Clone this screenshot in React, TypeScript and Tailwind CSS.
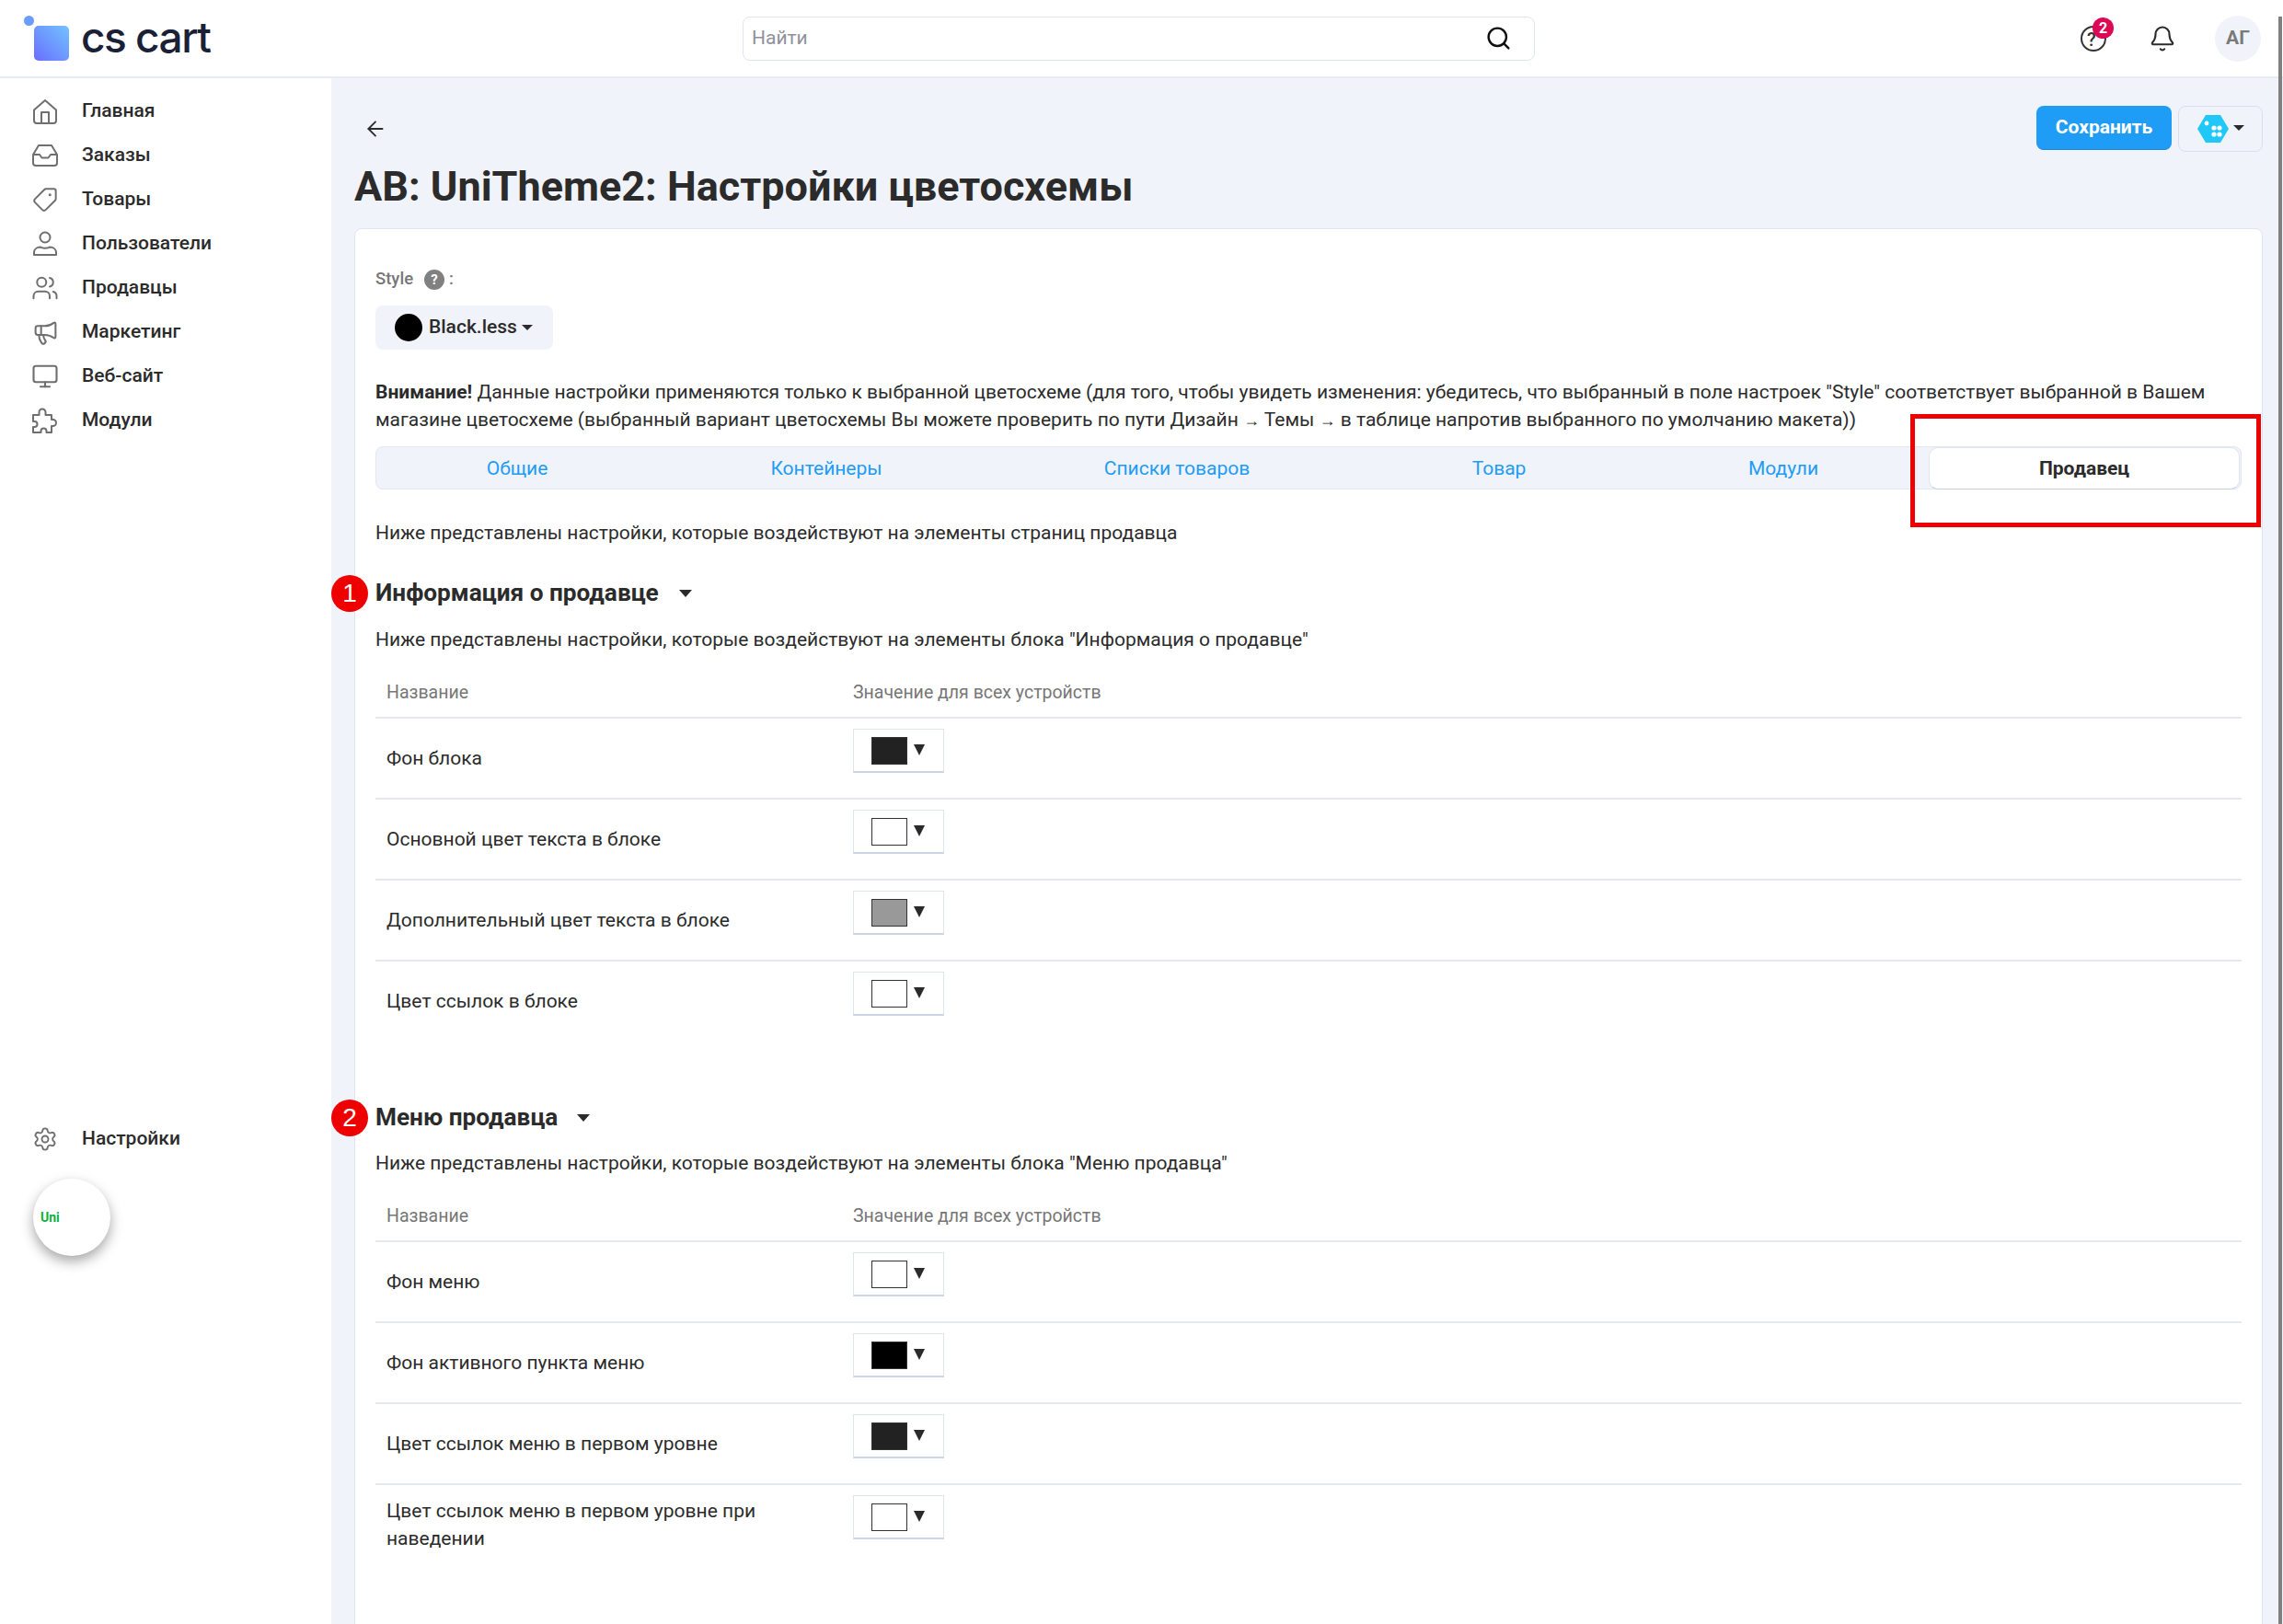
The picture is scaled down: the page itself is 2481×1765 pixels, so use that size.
import React from "react";
import { ArrowLeft, Bell, Megaphone, Monitor, Search, Settings, Tag, Users } from "lucide-react";

const HomeI = () => (
  <svg width="28" height="28" viewBox="0 0 28 28" fill="none" stroke="#6f6f6f" strokeWidth="2" strokeLinejoin="round"><path d="M2 12.5 14 2l12 10.5V24a3 3 0 0 1-3 3H5a3 3 0 0 1-3-3z" /><path d="M10 27V15h8v12" /></svg>
);
const InboxI = () => (
  <svg width="28" height="24" viewBox="0 0 28 24" fill="none" stroke="#6f6f6f" strokeWidth="2" strokeLinejoin="round"><path d="M1 11 7 1h14l6 10v9a3 3 0 0 1-3 3H4a3 3 0 0 1-3-3z" /><path d="M1 11h7l2.5 3.5h7L20 11h7" /></svg>
);
const UserI = () => (
  <svg width="28" height="28" viewBox="0 0 28 28" fill="none" stroke="#6f6f6f" strokeWidth="2" strokeLinejoin="round"><circle cx="14" cy="7" r="5.5" /><path d="M2 26v-2.5C2 20 5 17.5 9 17.5c1.5 1.5 8.500 1.500 10 0 4 0 7 2.500 7 6V26z" /></svg>
);
const PuzzleI = () => (
  <svg width="30" height="30" viewBox="0 0 30 30" fill="none" stroke="#6f6f6f" strokeWidth="2" strokeLinejoin="round"><path d="M2 9h6.500V6a3.500 3.500 0 0 1 7 0v3H22v5h1.500a3.500 3.500 0 0 1 0 7H22v7h-5.500v-1.500a3 3 0 0 0-6 0V28H2v-6h1.500a3 3 0 0 0 0-6H2z" /></svg>
);

const nav: [string, React.ReactNode][] = [
  ["Главная", <HomeI />],
  ["Заказы", <InboxI />],
  ["Товары", <Tag size={28} strokeWidth={1.7} color="#6f6f6f" className="-scale-x-100" />],
  ["Пользователи", <UserI />],
  ["Продавцы", <Users size={30} strokeWidth={1.6} color="#6f6f6f" />],
  ["Маркетинг", <Megaphone size={29} strokeWidth={1.7} color="#6f6f6f" />],
  ["Веб-сайт", <Monitor size={30} strokeWidth={1.7} color="#6f6f6f" />],
  ["Модули", <PuzzleI />],
];

const tabs = [
  ["Общие", "w-[306px]"],
  ["Контейнеры", "w-[366px]"],
  ["Списки товаров", "w-[396px]"],
  ["Товар", "w-[304px]"],
  ["Модули", "w-[314px]"],
];

function Swatch({ color }: { color: string }) {
  return (
    <div className="w-[99px] h-[48px] border border-[#dfe5ef] border-b-2 border-b-[#cbd5e5] bg-white flex items-start pt-[8px] pl-[19px] gap-[7px]">
      <div className="w-[39px] h-[30px] border border-[#333]" style={{ background: color }} />
      <div className="mt-[8px] w-0 h-0 border-l-[6px] border-r-[6px] border-t-[12px] border-l-transparent border-r-transparent border-t-[#2b2b2b]" />
    </div>
  );
}

function Section({ n, title, titleArrowGap, sub, subGap, rows }: { n: number; title: string; titleArrowGap: string; sub: string; subGap: string; rows: [string, string][] }) {
  return (
    <section>
      <div className="relative h-[48px] flex items-center">
        <div className="absolute left-[-48px] top-[4px] w-[40px] h-[40px] rounded-full bg-[#ee0000] text-white text-[28px] leading-[40px] text-center font-['Liberation_Sans']">{n}</div>
        <h2 className="text-[26.2px] font-bold text-[#2b2b2b]">{title}</h2>
        <div className={`${titleArrowGap} w-0 h-0 border-l-[7px] border-r-[7px] border-t-[8px] border-l-transparent border-r-transparent border-t-[#2b2b2b]`} />
      </div>
      <p className={`${subGap} h-[28px] text-[21px] leading-[28px] text-[#2b2b2b]`}>{sub}</p>
      <div className="mt-[17px] h-[55px] flex items-center border-b-2 border-[#e3e8f1] text-[19.5px] text-[#777]">
        <div className="w-[519px] pl-[12px]">Название</div>
        <div>Значение для всех устройств</div>
      </div>
      {rows.map(([label, color], i) => (
        <div key={i} className={`h-[88px] flex ${i < rows.length - 1 ? "border-b-2 border-[#e3e8f1]" : ""}`}>
          <div className={`w-[519px] pl-[12px] text-[21px] leading-[30px] text-[#2b2b2b] ${label.length > 40 ? "pt-[13px] pr-[80px]" : "pt-[28px]"}`}>{label}</div>
          <div className="pt-[11px]"><Swatch color={color} /></div>
        </div>
      ))}
    </section>
  );
}

export default function App() {
  return (
    <div className="relative h-[1765px] w-[2481px] overflow-hidden bg-white font-['Roboto',sans-serif] text-[#2b2b2b]">
      <header className="h-[85px] bg-white border-b-2 border-[#e6eaf2] flex items-center relative">
        <div className="w-[360px] pl-[26px] flex items-center shrink-0">
          <div className="relative w-[62px] h-[50px] shrink-0">
            <div className="absolute left-0 top-0 w-[11px] h-[11px] rounded-full bg-[#6a9dff]" />
            <div className="absolute left-[11px] top-[11px] w-[38px] h-[38px] rounded-[5px] bg-gradient-to-tr from-[#6a6bff] to-[#72c2ff]" />
          </div>
          <span className="font-['Inter'] text-[46px] leading-none font-medium tracking-[-1.5px] text-[#1a2036] -mt-[4px]">cs cart</span>
        </div>
        <div className="ml-[447px] w-[861px] h-[48px] rounded-[8px] border border-[#dfe4f0] bg-white flex items-center pl-[9px] pr-[24px] justify-between">
          <span className="text-[21px] text-[#8f929b] mt-[1px]">Найти</span>
          <Search size={29} strokeWidth={2} color="#111" />
        </div>
        <div className="ml-[592px] relative w-[30px] h-[30px]">
          <svg width="30" height="30" viewBox="0 0 30 30" fill="none" stroke="#333" strokeWidth="2"><circle cx="15" cy="15" r="13" /></svg>
          <span className="absolute left-[8px] top-[4px] text-[20px] font-medium leading-[24px] text-[#333]">?</span>
          <div className="absolute left-[14px] top-[-8px] w-[23px] h-[23px] rounded-full bg-[#dc0a54] text-white text-[16px] font-bold leading-[23px] text-center">2</div>
        </div>
        <Bell size={30} strokeWidth={1.7} color="#2b2b2b" className="ml-[45px]" />
        <div className="ml-[42px] w-[50px] h-[50px] rounded-full bg-[#f0f3f9] text-[21px] font-bold text-[#7a7a7a] flex items-center justify-center">АГ</div>
      </header>

      <div className="flex h-[1680px]">
        <aside className="w-[360px] shrink-0 bg-white flex flex-col pt-[12px]">
          {nav.map(([label, icon]) => (
            <div key={label} className="h-[48px] flex items-center">
              <div className="w-[50px] ml-[24px] flex justify-center shrink-0">{icon}</div>
              <span className="ml-[15px] text-[21px] font-medium text-[#2b2b2b]">{label}</span>
            </div>
          ))}
          <div className="mt-[733px] h-[48px] flex items-center">
            <div className="w-[50px] ml-[24px] flex justify-center shrink-0"><Settings size={28} strokeWidth={1.6} color="#6f6f6f" /></div>
            <span className="ml-[15px] text-[21px] font-medium">Настройки</span>
          </div>
          <div className="mt-[19px] ml-[36px] w-[84px] h-[84px] rounded-full bg-white shadow-[0_6px_14px_rgba(0,0,0,0.35)] flex items-center pl-[8px]">
            <span className="text-[14px] font-bold text-[#0bb13c]">Uni</span>
          </div>
        </aside>

        <main className="flex-1 bg-[#f0f3f9] pl-[25px] pr-[22px]">
          <div className="h-[95px] flex items-center justify-between pt-[15px]">
            <ArrowLeft size={26} strokeWidth={1.7} color="#2b2b2b" className="ml-[10px]" />
            <div className="flex gap-[7px]">
              <div className="w-[147px] h-[48px] rounded-[8px] bg-[#1e9cf6] border-b border-[#1a86d8] text-white text-[21px] font-bold flex items-center justify-center">Сохранить</div>
              <div className="w-[92px] h-[50px] rounded-[8px] border border-[#d9dee9] flex items-center pl-[20px] gap-[5px]">
                <svg width="34" height="30" viewBox="0 0 34 30"><path d="M9 0h16l9 15-9 15H9L0 15z" fill="#1fc8f8" /><g fill="#fff"><circle cx="10" cy="9" r="2.4" /><circle cx="18" cy="14" r="2.600" /><circle cx="24" cy="14" r="2.600" /><circle cx="18" cy="21" r="2.600" /><circle cx="24" cy="21" r="2.600" /></g></svg>
                <div className="w-0 h-0 border-l-[6px] border-r-[6px] border-t-[6px] border-l-transparent border-r-transparent border-t-[#2b2b2b] -mt-[2px]" />
              </div>
            </div>
          </div>
          <h1 className="h-[68px] text-[45px] font-bold leading-[46px] text-[#2b2b2b]">AB: UniTheme2: Настройки цветосхемы</h1>

          <div className="relative h-[1600px] bg-white border border-[#dde4f2] rounded-[8px] pl-[22px] pr-[22px] pt-[41px]">
            <div className="flex items-center text-[18.5px] font-medium text-[#777] h-[28px]">
              <span>Style</span>
              <span className="ml-[12px] w-[22px] h-[22px] rounded-full bg-[#808080] text-white text-[15px] font-bold flex items-center justify-center">?</span>
              <span className="ml-[5px]">:</span>
            </div>
            <div className="mt-[14px] w-[193px] h-[48px] rounded-[8px] bg-[#f0f3f9] flex items-center pl-[21px]">
              <div className="w-[30px] h-[30px] rounded-full bg-black" />
              <span className="ml-[7px] text-[21px] font-medium">Black.less</span>
              <div className="ml-[5px] w-0 h-0 border-l-[6px] border-r-[6px] border-t-[6px] border-l-transparent border-r-transparent border-t-[#2b2b2b]" />
            </div>
            <p className="mt-[31px] text-[21px] leading-[30px] text-[#2b2b2b]">
              <b className="font-bold">Внимание!</b> Данные настройки применяются только к выбранной цветосхеме (для того, чтобы увидеть изменения: убедитесь, что выбранный в поле настроек "Style" соответствует выбранной в Вашем магазине цветосхеме (выбранный вариант цветосхемы Вы можете проверить по пути Дизайн <span className="text-[18px] leading-[0]">→</span> Темы <span className="text-[18px] leading-[0]">→</span> в таблице напротив выбранного по умолчанию макета))
            </p>
            <div className="mt-[14px] h-[47px] w-[2028px] rounded-[8px] bg-[#f0f3f9] border border-[#e2e7f1] flex items-center relative pt-[2px]">
              {tabs.map(([t, w]) => (
                <div key={t} className={`${w} text-center text-[21px] text-[#1e9cf6]`}>{t}</div>
              ))}
              <div className="absolute left-[1687px] top-0 w-[338px] h-[46px] bg-white rounded-[10px] border border-[#e0e5f0] border-b-[#c5cfe2] text-center text-[21px] font-bold leading-[45px]">Продавец</div>
              <div className="absolute left-[1667px] top-[-36px] w-[381px] h-[123px] border-[5px] border-[#ee0000] pointer-events-none" />
            </div>
            <p className="mt-[32px] h-[30px] text-[21px] leading-[30px]">Ниже представлены настройки, которые воздействуют на элементы страниц продавца</p>
            <div className="mt-[27px]">
              <Section n={1} title="Информация о продавце" titleArrowGap="ml-[22px]" subGap="mt-[12px]" sub={'Ниже представлены настройки, которые воздействуют на элементы блока "Информация о продавце"'} rows={[["Фон блока", "#222222"], ["Основной цвет текста в блоке", "#ffffff"], ["Дополнительный цвет текста в блоке", "#999999"], ["Цвет ссылок в блоке", "#ffffff"]]} />
            </div>
            <div className="mt-[58px]">
              <Section n={2} title="Меню продавца" titleArrowGap="ml-[21px]" subGap="mt-[11px]" sub={'Ниже представлены настройки, которые воздействуют на элементы блока "Меню продавца"'} rows={[["Фон меню", "#ffffff"], ["Фон активного пункта меню", "#000000"], ["Цвет ссылок меню в первом уровне", "#222222"], ["Цвет ссылок меню в первом уровне при наведении", "#ffffff"]]} />
            </div>
          </div>
        </main>
      </div>
      <div className="absolute top-[18px] right-[1px] bottom-0 w-[4px] bg-[#808080]" />
    </div>
  );
}
